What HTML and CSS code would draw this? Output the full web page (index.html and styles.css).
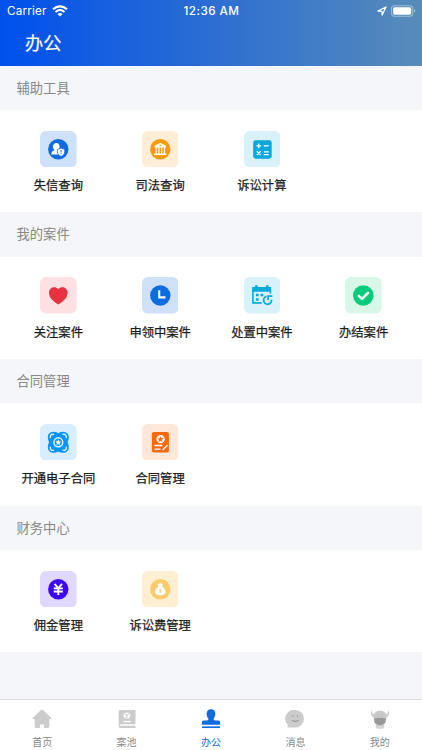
FILE: index.html
```html
<!DOCTYPE html>
<html lang="zh-CN">
<head>
<meta charset="utf-8">
<title>办公</title>
<link rel="stylesheet" href="styles.css">
</head>
<body>
<div class="app">
  <header class="header">
    <div class="status">
      <div class="status-left"><span>Carrier</span>
        <svg class="wifi" viewBox="0 0 16 12"><g fill="none" stroke="#fff" stroke-width="2.1"><path d="M1 4.2C5 .4 11 .4 15 4.2"/><path d="M3.500 7C6.200 4.600 9.800 4.600 12.500 7"/></g><path d="M5.500 8.900C7 7.700 9 7.700 10.500 8.900L8 11.500z" fill="#fff"/></svg>
      </div>
      <div class="clock">12:36 AM</div>
      <div class="status-right">
        <svg class="locate" viewBox="0 0 10 10"><path d="M.9 5.100 9 1 5.200 9.100 4.900 5.300z" fill="none" stroke="#fff" stroke-width="1.200" stroke-linejoin="round"/></svg>
        <svg class="battery" viewBox="0 0 26 12"><rect x=".6" y=".6" width="22" height="10.800" rx="3" fill="none" stroke="#fff" stroke-opacity=".45" stroke-width="1.100"/><rect x="2.200" y="2.200" width="18.800" height="7.600" rx="1.600" fill="#fff"/><path d="M24 4v4c1.600-.6 1.600-3.400 0-4z" fill="#fff" opacity=".5"/></svg>
      </div>
    </div>
    <h1 class="title">办公</h1>
  </header>
  <main class="content">
    <h2 class="section-title">辅助工具</h2>
    <div class="grid">
      <div class="item">
        <svg class="icon" viewBox="0 0 37 37"><rect width="37" height="37" rx="6" fill="#cfe0f9"/><circle cx="18.500" cy="18.500" r="10.300" fill="#0d6de0"/><path d="M11.500 23.700c0-2.700 1.400-3.500 3.200-4.200-1.200-1.200-1.700-2.500-1.500-4 .2-2.100 1.500-3.300 3.300-3.300s3.200 1.200 3.300 3.300c.1 1.300-.3 2.500-1.200 3.500v4.700z" fill="#fff"/><path d="M21.300 17.200 25 18.700v2.400c0 2.300-1.600 3.800-3.700 4.600-2.100-.8-3.700-2.300-3.700-4.600v-2.400z" fill="#fff" stroke="#0d6de0" stroke-width=".8"/><path d="M21.300 19.200v2.300m0 .8v1" stroke="#0d6de0" stroke-width="1"/></svg>
        <span class="label">失信查询</span>
      </div>
      <div class="item">
        <svg class="icon" viewBox="0 0 37 37"><rect width="37" height="37" rx="6" fill="#ffeed7"/><circle cx="18.500" cy="18.500" r="10.300" fill="#f99a0c"/><path d="M18.500 11.800 12.700 15v1.600h11.600V15z" fill="#fff"/><circle cx="18.500" cy="14.500" r=".8" fill="#f99a0c"/><path d="M14.300 16v7M17.100 16v7M19.900 16v7M22.700 16v7" stroke="#fff" stroke-width="1.200"/><path d="M12.300 23.500h12.400" stroke="#fff" stroke-width="1.500"/></svg>
        <span class="label">司法查询</span>
      </div>
      <div class="item">
        <svg class="icon" viewBox="0 0 37 37"><rect width="37" height="37" rx="6" fill="#d9f2f9"/><rect x="9.300" y="9.300" width="18.700" height="18.800" rx="2.500" fill="#0aa8dc"/><path d="M12.500 15h4.800M14.900 12.600v4.800M20 15h5M20 21.200h5M20 23.900h5M13 20.400l3.800 3.800M16.800 20.400 13 24.200" stroke="#fff" stroke-width="1.300"/></svg>
        <span class="label">诉讼计算</span>
      </div>
    </div>
    <h2 class="section-title">我的案件</h2>
    <div class="grid">
      <div class="item">
        <svg class="icon" viewBox="0 0 37 37"><rect width="37" height="37" rx="6" fill="#fde0e2"/><path d="M18.500 27.800C13 24.500 9.100 20.700 9.100 15.900c0-5.500 6.400-7.100 9.400-3.500 3-3.600 9.400-2 9.400 3.500 0 4.800-3.900 8.600-9.400 11.900z" fill="#e6333f"/></svg>
        <span class="label">关注案件</span>
      </div>
      <div class="item">
        <svg class="icon" viewBox="0 0 37 37"><rect width="37" height="37" rx="6" fill="#cfe0f9"/><circle cx="18.500" cy="18.700" r="10.300" fill="#0d6de0"/><path d="M17.400 13.500v7.100h6.300" fill="none" stroke="#fff" stroke-width="2.100"/></svg>
        <span class="label">申领中案件</span>
      </div>
      <div class="item">
        <svg class="icon" viewBox="0 0 37 37"><rect width="37" height="37" rx="6" fill="#d9f2f9"/><path d="M8.200 10.200h19.300V15H8.200zM11.200 8.400h2.600v3h-2.600zM22.200 8.400h2.600v3h-2.600z" fill="#0aa8dc"/><path d="M9 14v12.200h8.900M26.700 14v2.800" fill="none" stroke="#0aa8dc" stroke-width="1.600"/><path d="M12 17h2.800v2.500H12zM16.700 17h2.800v2.500h-2.800zM12 21.400h2.800v2.500H12z" fill="#0aa8dc"/><path d="M22.800 19.700a4 4 0 1 0 5 3.300M24.400 23.200v-3.800h4.300" fill="none" stroke="#0aa8dc" stroke-width="1.800"/></svg>
        <span class="label">处置中案件</span>
      </div>
      <div class="item">
        <svg class="icon" viewBox="0 0 37 37"><rect width="37" height="37" rx="6" fill="#d9f7e9"/><circle cx="18.500" cy="18.700" r="10.400" fill="#05cc7b"/><path d="m13.900 19 3.400 3.100 6-6" fill="none" stroke="#fff" stroke-width="2.500" stroke-linecap="round" stroke-linejoin="round"/></svg>
        <span class="label">办结案件</span>
      </div>
    </div>
    <h2 class="section-title">合同管理</h2>
    <div class="grid">
      <div class="item">
        <svg class="icon" viewBox="0 0 37 37"><rect width="37" height="37" rx="6" fill="#d8eefe"/><g fill="#0893f8"><ellipse cx="18.500" cy="18.500" rx="12.800" ry="7.800" transform="rotate(45 18.500 18.500)"/><ellipse cx="18.500" cy="18.500" rx="12.800" ry="7.800" transform="rotate(-45 18.500 18.500)"/></g><g fill="none" stroke="#e8f6ff" stroke-width="1.300"><path d="M10.500 14.200c-.7-2.900 1-4.300 3.800-3.700M26.500 14.200c.7-2.900-1-4.300-3.800-3.700M10.500 22.800c-.7 2.900 1 4.300 3.800 3.700M26.500 22.800c.7 2.900-1 4.300-3.800 3.700"/><circle cx="18.500" cy="18.500" r="4.500" stroke-width="1.500"/></g><path d="m18.500 15.500.9 2 2.100.2-1.600 1.400.5 2.100-1.900-1.100-1.900 1.100.5-2.100-1.600-1.400 2.100-.2z" fill="#fff"/></svg>
        <span class="label">开通电子合同</span>
      </div>
      <div class="item">
        <svg class="icon" viewBox="0 0 37 37"><rect width="37" height="37" rx="6" fill="#ffe7d9"/><rect x="10" y="8.200" width="17.200" height="20.600" rx="1.800" fill="#fb690b"/><circle cx="18.800" cy="15.300" r="4.200" fill="#fff"/><path d="m18.800 12.300.9 2 2.200.2-1.600 1.400.5 2.200-2-1.200-2 1.200.5-2.200-1.600-1.400 2.200-.2z" fill="#fb690b"/><path d="M12.500 21.800h8.200M12.500 25.400h6.200M20.800 26.200l5-4.700" stroke="#fff" stroke-width="1.400"/></svg>
        <span class="label">合同管理</span>
      </div>
    </div>
    <h2 class="section-title">财务中心</h2>
    <div class="grid">
      <div class="item">
        <svg class="icon" viewBox="0 0 37 37"><rect width="37" height="37" rx="6" fill="#e0d8fe"/><circle cx="18.500" cy="18.500" r="10.300" fill="#3d08ed"/><path d="m14.700 13 3.800 4.200 3.800-4.200M13.900 17.600h9.200M13.900 20.700h9.200M18.500 17v7.200" fill="none" stroke="#fff" stroke-width="1.900"/></svg>
        <span class="label">佣金管理</span>
      </div>
      <div class="item">
        <svg class="icon" viewBox="0 0 37 37"><rect width="37" height="37" rx="6" fill="#ffefd2"/><circle cx="18.500" cy="18.500" r="10.300" fill="#f9cb6b"/><path d="M15.800 13.100c1.800.4 1.800-.9 2.700-.9s.9 1.300 2.700.9l-.8 2.700c2.300 1.200 3.500 3.200 3.500 5.200 0 2.300-2 3.500-5.400 3.500s-5.400-1.200-5.400-3.500c0-2 1.200-4 3.500-5.200z" fill="#fff"/><path d="m17.400 18 1.100 1.300 1.100-1.300M18.500 19.200v3M17.300 20.500h2.400" fill="none" stroke="#f9cb6b" stroke-width=".8"/></svg>
        <span class="label">诉讼费管理</span>
      </div>
    </div>
  </main>
  <nav class="tabs">
    <div class="tab">
      <svg class="tab-icon" viewBox="0 0 22 22"><path d="M10.200 1.800q.8-.7 1.600 0l8.500 8.100q.6 1.100-.7 1.100h-1.300v7.300q0 1.700-1.500 1.700h-3.700v-3.500H8.900V20H5.200q-1.500 0-1.500-1.700V11H2.400q-1.300 0-.7-1.100z" fill="#ccc"/></svg>
      <span>首页</span>
    </div>
    <div class="tab">
      <svg class="tab-icon" viewBox="0 0 22 22"><path d="M4.500 2h15v14.200h-15q-.8 0-.8.800t.8.800h15V20h-15Q2.600 20 2.600 18V4q0-2 1.900-2z" fill="#ccc"/><path d="M7.200 7.500a3.700 3.700 0 0 1 7.300 0 3.700 3.700 0 0 1-7.300 0z" fill="#fff"/><path d="m8.700 5.800 2.200 1.300L13 5.800M10.900 7v3" stroke="#ccc" stroke-width="1" fill="none"/><path d="M7.300 13.600h7.400" stroke="#fff" stroke-width="1.300"/></svg>
      <span>案池</span>
    </div>
    <div class="tab active">
      <svg class="tab-icon" viewBox="0 0 22 22"><path d="M8.400 10.500C5.800 8 5.700 1.200 11 1.200S16.200 8 13.600 10.500q-.4 2 1.700 2h3q1.900 0 1.900 2v2.200H1.800v-2.200q0-2 1.900-2h3q2.100 0 1.700-2z" fill="#126be0"/><path d="M2 19.200h18" stroke="#126be0" stroke-width="1.700"/></svg>
      <span>办公</span>
    </div>
    <div class="tab">
      <svg class="tab-icon" viewBox="0 0 22 22"><path d="M11.200 2a8.700 8.700 0 1 1 0 17.500H3.700q-1.200 0-.5-1l.7-1.500A8.800 8.800 0 0 1 11.200 2z" fill="#ccc"/><path d="M8.900 7.500v1.600M13.500 7.500v1.600M8 12.300q3.200 2.200 6.400 0" stroke="#999" stroke-width="1.200" fill="none"/></svg>
      <span>消息</span>
    </div>
    <div class="tab">
      <svg class="tab-icon" viewBox="0 0 22 22"><ellipse cx="11" cy="18.500" rx="4.600" ry="2.300" fill="#d4d4d4"/><path d="M3 1.500q-1 4 2 5l1-2q5-4 10 0l1 2q3-1 2-5 3 5-1.700 8.500-.2 8-6.300 8t-6.300-8Q0 6.500 3 1.500z" fill="#c9c9c9"/><path d="M5.300 10.500q5.700-1.600 11.400 0v2.500q-1 4-5.700 4T5.300 13z" fill="#999"/><circle cx="8.600" cy="8" r=".6" fill="#aaa"/><circle cx="13.400" cy="8" r=".6" fill="#aaa"/></svg>
      <span>我的</span>
    </div>
  </nav>
</div>
</body>
</html>
```
FILE: styles.css
```css
* { box-sizing: border-box; }
body {
  margin: 0;
  font-family: "Noto Sans CJK SC", sans-serif;
  background: #f5f6fa;
}
.app {
  height: 750px;
  display: flex;
  flex-direction: column;
  overflow: hidden;
}
.header {
  height: 65.500px;
  flex: none;
  color: #fff;
  background: linear-gradient(90deg, #0050ec, #588cb8);
}
.status {
  height: 22px;
  padding: 0 6px 0 7px;
  display: grid;
  grid-template-columns: 1fr auto 1fr;
  align-items: center;
  font: 11.700px/22px Inter, sans-serif;
  letter-spacing: .2px;
}
.status-left, .status-right { display: flex; align-items: center; }
.status-left { gap: 5px; }
.status-right { justify-content: flex-end; gap: 4px; }
.clock { font-weight: 500; letter-spacing: .45px; }
.wifi { width: 16px; height: 12px; }
.locate { width: 10px; height: 10px; }
.battery { width: 25px; height: 12px; }
.title {
  margin: 0;
  padding-left: 25px;
  font-size: 18.300px;
  line-height: 41px;
  font-weight: 400;
  -webkit-text-stroke: .2px currentColor;
}
.content { flex: 1; }
.section-title {
  height: 44.500px;
  margin: 0;
  padding-left: 16.500px;
  color: #888;
  font-size: 13.300px;
  line-height: 44.500px;
  font-weight: 400;
}
.grid {
  height: 102.200px;
  padding: 20.500px 7.500px 0;
  display: grid;
  grid-template-columns: repeat(4, 1fr);
  background: #fff;
}
.item {
  display: flex;
  flex-direction: column;
  align-items: center;
}
.icon { width: 36.600px; height: 36.600px; }
.label {
  margin-top: 8px;
  color: #1c1c1c;
  font-size: 12.300px;
  line-height: 20px;
  font-weight: 400;
  -webkit-text-stroke: .25px currentColor;
  white-space: nowrap;
}
.tabs {
  height: 51px;
  flex: none;
  display: grid;
  grid-template-columns: repeat(5, 1fr);
  border-top: 1px solid #dcdde0;
  background: #fff;
}
.tab {
  padding-top: 8px;
  display: flex;
  flex-direction: column;
  align-items: center;
  color: #888;
  font-size: 10px;
  line-height: 14px;
}
.tab-icon { width: 22px; height: 22px; margin-bottom: 5px; }
.active { color: #126be0; }
```
